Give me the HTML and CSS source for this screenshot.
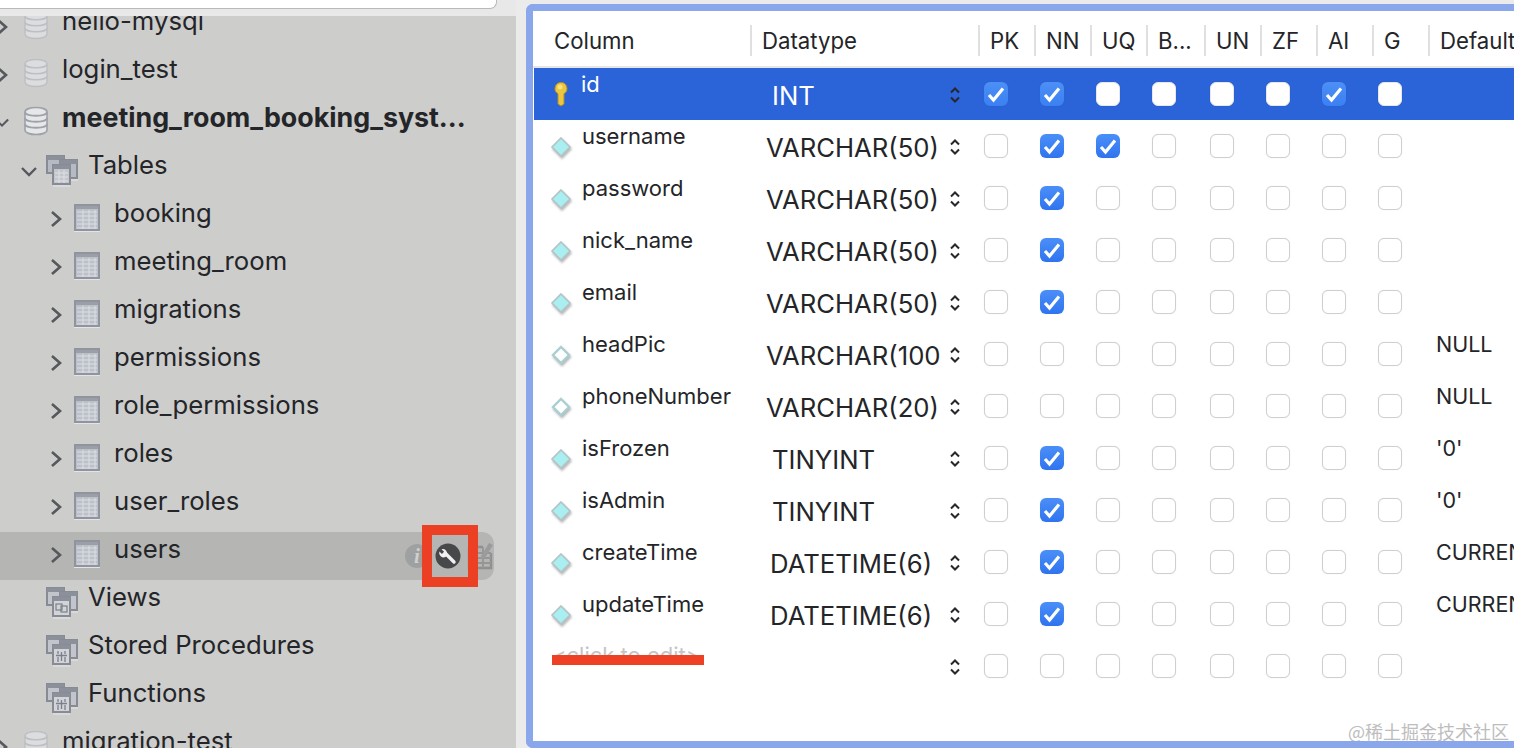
FILE: index.html
```html
<!DOCTYPE html>
<html lang="en">
<head>
<meta charset="utf-8">
<title>MySQL Workbench</title>
<link rel="stylesheet" href="styles.css">
</head>
<body>
<svg class="defs" width="0" height="0" aria-hidden="true">
  <defs>
    <symbol id="right" viewBox="0 0 14 20"><path d="M3 3l8 7-8 7" fill="none" stroke="#55585c" stroke-width="2.6"/></symbol>
    <symbol id="down" viewBox="0 0 16 20"><path d="M1 6l7 7 7-7" fill="none" stroke="#55585c" stroke-width="2.4"/></symbol>
    <symbol id="db" viewBox="0 0 24 30">
      <path d="M1 6c0-6 22-6 22 0v18c0 6-22 6-22 0z" fill="#dcddde" stroke="#bdbfc3" stroke-width="1.4"/>
      <path d="M1 6c0 5 22 5 22 0M1 12c0 5 22 5 22 0M1 18c0 5 22 5 22 0" fill="none" stroke="#bdbfc3" stroke-width="1.6"/>
    </symbol>
    <symbol id="db-open" viewBox="0 0 24 30">
      <path d="M1 6c0-6 22-6 22 0v18c0 6-22 6-22 0z" fill="#e6e7e8" stroke="#9da1a8" stroke-width="1.6"/>
      <path d="M1 6c0 5 22 5 22 0M1 12c0 5 22 5 22 0M1 18c0 5 22 5 22 0" fill="none" stroke="#9da1a8" stroke-width="1.800"/>
    </symbol>
    <symbol id="table" viewBox="0 0 26 28">
      <rect x="1" y="1" width="24" height="25" fill="#bcc0c8" stroke="#8f949e" stroke-width="2"/>
      <rect x="2" y="2" width="22" height="3" fill="#9a9fa8"/>
      <path d="M3 8h20M3 12h20M3 16h20M3 20h20M3 24h20M9 6v19M15 6v19M21 6v19" stroke="#dcdee2" stroke-width="1"/>
      <path d="M0 27.500h26" stroke="#e4e4e4" stroke-width="1"/>
    </symbol>
    <symbol id="group" viewBox="0 0 32 32">
      <rect x="1" y="1" width="17" height="17" fill="#b6bac2" stroke="#868b95" stroke-width="2"/>
      <rect x="1" y="1" width="17" height="4" fill="#8b909a"/>
      <rect x="14" y="5" width="17" height="18" fill="#b6bac2" stroke="#868b95" stroke-width="2"/>
      <rect x="14" y="5" width="17" height="4" fill="#8b909a"/>
      <rect x="7" y="10" width="17" height="19" fill="#c3c6cc" stroke="#868b95" stroke-width="2"/>
      <rect x="7" y="10" width="17" height="4" fill="#8b909a"/>
      <path d="M9 18h13M9 22h13M9 26h13M13 15v13M18 15v13" stroke="#dee0e4" stroke-width="1"/>
      <path d="M7 31h17M25 25h7" stroke="#e6e6e6" stroke-width="1"/>
    </symbol>
    <symbol id="group-view" viewBox="0 0 32 32">
      <rect x="1" y="1" width="17" height="17" fill="#c2c5cb" stroke="#868b95" stroke-width="2"/>
      <rect x="1" y="1" width="17" height="4" fill="#8b909a"/>
      <rect x="14" y="5" width="17" height="18" fill="#c2c5cb" stroke="#868b95" stroke-width="2"/>
      <rect x="14" y="5" width="17" height="4" fill="#8b909a"/>
      <rect x="7" y="10" width="17" height="19" fill="#d2d4d8" stroke="#868b95" stroke-width="2"/>
      <rect x="7" y="10" width="17" height="4" fill="#8b909a"/>
      <rect x="10" y="17" width="6" height="6" fill="none" stroke="#7b808a" stroke-width="1.200"/>
      <rect x="15" y="19" width="6" height="6" fill="none" stroke="#7b808a" stroke-width="1.200"/>
      <path d="M7 31h17M25 25h7" stroke="#e6e6e6" stroke-width="1"/>
    </symbol>
    <symbol id="group-proc" viewBox="0 0 32 32">
      <rect x="1" y="1" width="17" height="17" fill="#c2c5cb" stroke="#868b95" stroke-width="2"/>
      <rect x="1" y="1" width="17" height="4" fill="#8b909a"/>
      <rect x="14" y="5" width="17" height="18" fill="#c2c5cb" stroke="#868b95" stroke-width="2"/>
      <rect x="14" y="5" width="17" height="4" fill="#8b909a"/>
      <rect x="7" y="10" width="17" height="19" fill="#d2d4d8" stroke="#868b95" stroke-width="2"/>
      <rect x="7" y="10" width="17" height="4" fill="#8b909a"/>
      <path d="M12 16v3M12 22v5M15.500 17v9M19 16v3M19 22v5M10 20.500h5M16 20.500h5" stroke="#7b808a" stroke-width="1.300"/>
      <path d="M7 31h17M25 25h7" stroke="#e6e6e6" stroke-width="1"/>
    </symbol>
    <symbol id="key" viewBox="0 0 18 26">
      <path d="M9 1.500a6 6 0 0 1 3 11.200V23l-3 2-3-2V12.700a6 6 0 0 1 3-11.200z" fill="#ecc63f" stroke="#a98e2c" stroke-width="1"/>
      <circle cx="8" cy="6" r="2.500" fill="#f8e27e"/>
    </symbol>
    <symbol id="dia" viewBox="0 0 22 22">
      <path d="M11 2l9 9-9 9-9-9z" fill="#a9eef0" stroke="#b4c4c5" stroke-width="1.600"/>
    </symbol>
    <symbol id="dia-null" viewBox="0 0 22 22">
      <path d="M11 3l8 8-8 8-8-8z" fill="#fff" stroke="#a9cfd2" stroke-width="2.400"/>
    </symbol>
    <symbol id="updown" viewBox="0 0 12 18">
      <path d="M2 6.500l4-4 4 4M2 11.500l4 4 4-4" fill="none" stroke="#26282c" stroke-width="2"/>
    </symbol>
    <symbol id="check" viewBox="0 0 24 24">
      <path d="M5 13l4.500 5L19 6.500" fill="none" stroke="#fff" stroke-width="3.200"/>
    </symbol>
    <symbol id="wrench" viewBox="0 0 26 26">
      <circle cx="13" cy="13" r="12.500" fill="#47484a"/>
      <path d="M19 19l-7.500-7.500" stroke="#f1f1f1" stroke-width="3.400" stroke-linecap="round"/>
      <path d="M12 12a4.500 4.500 0 0 0-5.500-5.700l2.600 2.500-2.200 2.200-2.500-2.500A4.500 4.500 0 0 0 10.500 14z" fill="#f1f1f1"/>
    </symbol>
    <symbol id="tbl-edit" viewBox="0 0 26 32">
      <path d="M2 8h14M2 8v21h22V14" fill="none" stroke="#8f9090" stroke-width="2.400"/>
      <path d="M2 14h22M2 19h22M2 24h22M9 8v21M16 8v21" stroke="#959696" stroke-width="1.800"/>
      <path d="M14 17l8-13 4 2-8 13-4 1z" fill="#9a9b9b"/>
    </symbol>
  </defs>
</svg>

<div class="app">
  <aside class="side">
    <div class="search-area"><div class="search"></div></div>
    <div class="tree-clip">
      <ul class="tree">
        <li class="node l0"><svg class="chev"><use href="#right"/></svg><svg class="ic-db"><use href="#db"/></svg><span class="label">hello-mysql</span></li>
        <li class="node l0"><svg class="chev"><use href="#right"/></svg><svg class="ic-db"><use href="#db"/></svg><span class="label">login_test</span></li>
        <li class="node l0"><svg class="chev"><use href="#down"/></svg><svg class="ic-db"><use href="#db-open"/></svg><span class="label strong">meeting_room_booking_syst...</span></li>
        <li class="node l1"><svg class="chev"><use href="#down"/></svg><svg class="ic-group"><use href="#group"/></svg><span class="label">Tables</span></li>
        <li class="node l2"><svg class="chev"><use href="#right"/></svg><svg class="ic-table"><use href="#table"/></svg><span class="label">booking</span></li>
        <li class="node l2"><svg class="chev"><use href="#right"/></svg><svg class="ic-table"><use href="#table"/></svg><span class="label">meeting_room</span></li>
        <li class="node l2"><svg class="chev"><use href="#right"/></svg><svg class="ic-table"><use href="#table"/></svg><span class="label">migrations</span></li>
        <li class="node l2"><svg class="chev"><use href="#right"/></svg><svg class="ic-table"><use href="#table"/></svg><span class="label">permissions</span></li>
        <li class="node l2"><svg class="chev"><use href="#right"/></svg><svg class="ic-table"><use href="#table"/></svg><span class="label">role_permissions</span></li>
        <li class="node l2"><svg class="chev"><use href="#right"/></svg><svg class="ic-table"><use href="#table"/></svg><span class="label">roles</span></li>
        <li class="node l2"><svg class="chev"><use href="#right"/></svg><svg class="ic-table"><use href="#table"/></svg><span class="label">user_roles</span></li>
        <li class="node l2 hover"><svg class="chev"><use href="#right"/></svg><svg class="ic-table"><use href="#table"/></svg><span class="label">users</span>
          <span class="tools">
            <span class="tool-info">i</span>
            <svg class="tool-wrench"><use href="#wrench"/></svg>
            <svg class="tool-edit"><use href="#tbl-edit"/></svg>
          </span>
          <span class="mark-box"></span>
        </li>
        <li class="node l1"><span class="chev"></span><svg class="ic-group"><use href="#group-view"/></svg><span class="label">Views</span></li>
        <li class="node l1"><span class="chev"></span><svg class="ic-group"><use href="#group-proc"/></svg><span class="label">Stored Procedures</span></li>
        <li class="node l1"><span class="chev"></span><svg class="ic-group"><use href="#group-proc"/></svg><span class="label">Functions</span></li>
        <li class="node l0"><svg class="chev"><use href="#right"/></svg><svg class="ic-db"><use href="#db"/></svg><span class="label">migration-test</span></li>
      </ul>
    </div>
  </aside>

  <main class="panel">
    <div class="grid">
      <div class="row head">
        <div class="hc first"><span>Column</span></div>
        <div class="hc"><span>Datatype</span></div>
        <div class="hc"><span>PK</span></div>
        <div class="hc"><span>NN</span></div>
        <div class="hc"><span>UQ</span></div>
        <div class="hc"><span>B...</span></div>
        <div class="hc"><span>UN</span></div>
        <div class="hc"><span>ZF</span></div>
        <div class="hc"><span>AI</span></div>
        <div class="hc"><span>G</span></div>
        <div class="hc"><span>Default</span></div>
      </div>

      <div class="row selected">
        <div class="name"><svg class="ic-key"><use href="#key"/></svg><span>id</span></div>
        <div class="type"><span class="tname t-int">INT</span><svg class="updown"><use href="#updown"/></svg></div>
        <div class="cb"><span class="box on"><svg><use href="#check"/></svg></span></div>
        <div class="cb"><span class="box on"><svg><use href="#check"/></svg></span></div>
        <div class="cb"><span class="box"></span></div>
        <div class="cb"><span class="box"></span></div>
        <div class="cb"><span class="box"></span></div>
        <div class="cb"><span class="box"></span></div>
        <div class="cb"><span class="box on"><svg><use href="#check"/></svg></span></div>
        <div class="cb"><span class="box"></span></div>
        <div class="def"></div>
      </div>

      <div class="row">
        <div class="name"><svg class="ic-dia"><use href="#dia"/></svg><span>username</span></div>
        <div class="type"><span class="tname t-var">VARCHAR(50)</span><svg class="updown"><use href="#updown"/></svg></div>
        <div class="cb"><span class="box"></span></div>
        <div class="cb"><span class="box on"><svg><use href="#check"/></svg></span></div>
        <div class="cb"><span class="box on"><svg><use href="#check"/></svg></span></div>
        <div class="cb"><span class="box"></span></div>
        <div class="cb"><span class="box"></span></div>
        <div class="cb"><span class="box"></span></div>
        <div class="cb"><span class="box"></span></div>
        <div class="cb"><span class="box"></span></div>
        <div class="def"></div>
      </div>

      <div class="row">
        <div class="name"><svg class="ic-dia"><use href="#dia"/></svg><span>password</span></div>
        <div class="type"><span class="tname t-var">VARCHAR(50)</span><svg class="updown"><use href="#updown"/></svg></div>
        <div class="cb"><span class="box"></span></div>
        <div class="cb"><span class="box on"><svg><use href="#check"/></svg></span></div>
        <div class="cb"><span class="box"></span></div>
        <div class="cb"><span class="box"></span></div>
        <div class="cb"><span class="box"></span></div>
        <div class="cb"><span class="box"></span></div>
        <div class="cb"><span class="box"></span></div>
        <div class="cb"><span class="box"></span></div>
        <div class="def"></div>
      </div>

      <div class="row">
        <div class="name"><svg class="ic-dia"><use href="#dia"/></svg><span>nick_name</span></div>
        <div class="type"><span class="tname t-var">VARCHAR(50)</span><svg class="updown"><use href="#updown"/></svg></div>
        <div class="cb"><span class="box"></span></div>
        <div class="cb"><span class="box on"><svg><use href="#check"/></svg></span></div>
        <div class="cb"><span class="box"></span></div>
        <div class="cb"><span class="box"></span></div>
        <div class="cb"><span class="box"></span></div>
        <div class="cb"><span class="box"></span></div>
        <div class="cb"><span class="box"></span></div>
        <div class="cb"><span class="box"></span></div>
        <div class="def"></div>
      </div>

      <div class="row">
        <div class="name"><svg class="ic-dia"><use href="#dia"/></svg><span>email</span></div>
        <div class="type"><span class="tname t-var">VARCHAR(50)</span><svg class="updown"><use href="#updown"/></svg></div>
        <div class="cb"><span class="box"></span></div>
        <div class="cb"><span class="box on"><svg><use href="#check"/></svg></span></div>
        <div class="cb"><span class="box"></span></div>
        <div class="cb"><span class="box"></span></div>
        <div class="cb"><span class="box"></span></div>
        <div class="cb"><span class="box"></span></div>
        <div class="cb"><span class="box"></span></div>
        <div class="cb"><span class="box"></span></div>
        <div class="def"></div>
      </div>

      <div class="row">
        <div class="name"><svg class="ic-dia"><use href="#dia-null"/></svg><span>headPic</span></div>
        <div class="type"><span class="tname t-var">VARCHAR(100)</span><svg class="updown"><use href="#updown"/></svg></div>
        <div class="cb"><span class="box"></span></div>
        <div class="cb"><span class="box"></span></div>
        <div class="cb"><span class="box"></span></div>
        <div class="cb"><span class="box"></span></div>
        <div class="cb"><span class="box"></span></div>
        <div class="cb"><span class="box"></span></div>
        <div class="cb"><span class="box"></span></div>
        <div class="cb"><span class="box"></span></div>
        <div class="def">NULL</div>
      </div>

      <div class="row">
        <div class="name"><svg class="ic-dia"><use href="#dia-null"/></svg><span>phoneNumber</span></div>
        <div class="type"><span class="tname t-var">VARCHAR(20)</span><svg class="updown"><use href="#updown"/></svg></div>
        <div class="cb"><span class="box"></span></div>
        <div class="cb"><span class="box"></span></div>
        <div class="cb"><span class="box"></span></div>
        <div class="cb"><span class="box"></span></div>
        <div class="cb"><span class="box"></span></div>
        <div class="cb"><span class="box"></span></div>
        <div class="cb"><span class="box"></span></div>
        <div class="cb"><span class="box"></span></div>
        <div class="def">NULL</div>
      </div>

      <div class="row">
        <div class="name"><svg class="ic-dia"><use href="#dia"/></svg><span>isFrozen</span></div>
        <div class="type"><span class="tname t-tiny">TINYINT</span><svg class="updown"><use href="#updown"/></svg></div>
        <div class="cb"><span class="box"></span></div>
        <div class="cb"><span class="box on"><svg><use href="#check"/></svg></span></div>
        <div class="cb"><span class="box"></span></div>
        <div class="cb"><span class="box"></span></div>
        <div class="cb"><span class="box"></span></div>
        <div class="cb"><span class="box"></span></div>
        <div class="cb"><span class="box"></span></div>
        <div class="cb"><span class="box"></span></div>
        <div class="def">'0'</div>
      </div>

      <div class="row">
        <div class="name"><svg class="ic-dia"><use href="#dia"/></svg><span>isAdmin</span></div>
        <div class="type"><span class="tname t-tiny">TINYINT</span><svg class="updown"><use href="#updown"/></svg></div>
        <div class="cb"><span class="box"></span></div>
        <div class="cb"><span class="box on"><svg><use href="#check"/></svg></span></div>
        <div class="cb"><span class="box"></span></div>
        <div class="cb"><span class="box"></span></div>
        <div class="cb"><span class="box"></span></div>
        <div class="cb"><span class="box"></span></div>
        <div class="cb"><span class="box"></span></div>
        <div class="cb"><span class="box"></span></div>
        <div class="def">'0'</div>
      </div>

      <div class="row">
        <div class="name"><svg class="ic-dia"><use href="#dia"/></svg><span>createTime</span></div>
        <div class="type"><span class="tname t-date">DATETIME(6)</span><svg class="updown"><use href="#updown"/></svg></div>
        <div class="cb"><span class="box"></span></div>
        <div class="cb"><span class="box on"><svg><use href="#check"/></svg></span></div>
        <div class="cb"><span class="box"></span></div>
        <div class="cb"><span class="box"></span></div>
        <div class="cb"><span class="box"></span></div>
        <div class="cb"><span class="box"></span></div>
        <div class="cb"><span class="box"></span></div>
        <div class="cb"><span class="box"></span></div>
        <div class="def">CURRENT_TIMESTAMP(6)</div>
      </div>

      <div class="row">
        <div class="name"><svg class="ic-dia"><use href="#dia"/></svg><span>updateTime</span></div>
        <div class="type"><span class="tname t-date">DATETIME(6)</span><svg class="updown"><use href="#updown"/></svg></div>
        <div class="cb"><span class="box"></span></div>
        <div class="cb"><span class="box on"><svg><use href="#check"/></svg></span></div>
        <div class="cb"><span class="box"></span></div>
        <div class="cb"><span class="box"></span></div>
        <div class="cb"><span class="box"></span></div>
        <div class="cb"><span class="box"></span></div>
        <div class="cb"><span class="box"></span></div>
        <div class="cb"><span class="box"></span></div>
        <div class="def">CURRENT_TIMESTAMP(6)</div>
      </div>

      <div class="row">
        <div class="name new"><span class="hint">&lt;click to edit&gt;</span><span class="mark-line"></span></div>
        <div class="type"><span class="tname"></span><svg class="updown"><use href="#updown"/></svg></div>
        <div class="cb"><span class="box"></span></div>
        <div class="cb"><span class="box"></span></div>
        <div class="cb"><span class="box"></span></div>
        <div class="cb"><span class="box"></span></div>
        <div class="cb"><span class="box"></span></div>
        <div class="cb"><span class="box"></span></div>
        <div class="cb"><span class="box"></span></div>
        <div class="cb"><span class="box"></span></div>
        <div class="def"></div>
      </div>
    </div>
    <div class="watermark">@稀土掘金技术社区</div>
  </main>
</div>
</body>
</html>
```
FILE: styles.css
```css
* { box-sizing: border-box; }
html, body { margin: 0; height: 100%; overflow: hidden; }
body { font-family: Inter, "Noto Sans", "Liberation Sans", sans-serif; color: #242528; background: #ebebeb; }
.defs { position: absolute; }
ul { list-style: none; margin: 0; padding: 0; }

.app { display: flex; height: 748px; width: 1514px; }

/* sidebar */
.side { width: 516px; flex: none; height: 100%; display: flex; flex-direction: column; background: #cdcdcc; }
.search-area { height: 16px; flex: none; background: #e8e8e8; }
.search { width: 497px; height: 9px; background: #fff; border-bottom: 1px solid #b9b9b9; border-right: 1px solid #b9b9b9; border-bottom-right-radius: 7px; }
.tree-clip { flex: 1; overflow: hidden; }
.tree { margin-top: -12px; }
.node { position: relative; display: flex; align-items: flex-start; height: 48px; font-size: 25.700px; line-height: 34px; white-space: nowrap; }
.chev { width: 14px; height: 20px; flex: none; margin-top: 13px; }
.l0 .chev { margin-left: -5px; margin-right: -2px; }
.l1 { padding-left: 21px; }
.l1 .chev { width: 16px; margin-right: -2px; margin-top: 14px; }
.l2 { padding-left: 49px; }
.ic-db { width: 24px; height: 30px; flex: none; margin: 6px 14px 0 17px; }
.ic-group { width: 32px; height: 32px; flex: none; margin: 7px 10px 0 11px; }
.ic-table { width: 26px; height: 28px; flex: none; margin: 8px 14px 0 11px; }
.strong { font-weight: 700; font-size: 26.800px; }
.hover { background: #b5b5b4; width: 494px; border-radius: 0 12px 12px 0; }
.tools { position: absolute; top: 0; right: 0; height: 48px; width: 92px; }
.tool-info { position: absolute; left: 3px; top: 12px; width: 24px; height: 24px; border-radius: 50%; background: #9fa0a0; color: #cfcfcf; font: italic 700 21px/24px "Liberation Serif", serif; text-align: center; }
.tool-wrench { position: absolute; left: 33px; top: 11px; width: 26px; height: 26px; }
.tool-edit { position: absolute; left: 65px; top: 7px; width: 26px; height: 32px; }
.mark-box { position: absolute; left: 422px; top: -7px; width: 56px; height: 62px; border: 10px solid #ec4024; }

/* table panel */
.panel { position: relative; width: 988px; margin: 4px 0 0 10px; height: 744px; flex: none; border: 7px solid #8aa7ec; border-right: 0; border-radius: 7px 0 0 7px; background: #fff; overflow: hidden; }
.row { display: grid; grid-template-columns: 217px 228px 56px 56px 56px 58px 56px 56px 56px 56px 1fr; height: 52px; white-space: nowrap; }
.head { height: 57px; padding-top: 14px; border-bottom: 2px solid #e6e6e6; font-size: 22.200px; }
.hc { height: 31px; line-height: 31px; border-left: 2px solid #e0e0e0; padding-left: 10px; }
.hc.first { border-left: 0; padding-left: 21px; }
.grid .row:not(.head) { margin-left: 1px; margin-right: -1px; }
.selected { background: #2b63d8; color: #fff; }
.name { display: flex; align-items: flex-start; padding-left: 18px; font-size: 22px; line-height: 32px; position: relative; }
.ic-key { width: 18px; height: 26px; flex: none; margin: 13px 11px 0 0; }
.ic-dia { width: 22px; height: 22px; flex: none; margin: 16px 10px 0 -2px; filter: drop-shadow(1px 2px 1px rgba(0,0,0,.28)); }
.type { display: flex; justify-content: space-between; align-items: flex-start; padding-right: 18px; font-size: 25.700px; line-height: 56px; }
.tname { display: block; overflow: hidden; }
.t-int { padding-left: 21px; }
.t-var { padding-left: 15px; max-width: 189px; }
.t-tiny { padding-left: 21px; }
.t-date { padding-left: 19px; }
.updown { width: 12px; height: 18px; flex: none; margin-top: 18px; }
.cb { padding: 14px 0 0 5px; }
.box { display: block; width: 24px; height: 24px; border-radius: 6px; background: #fff; border: 1px solid #cfcfcf; box-shadow: 0 0 1px rgba(0,0,0,.12); }
.selected .box { border-color: #e8e8e8; }
.box.on, .selected .box.on { background: linear-gradient(#4a8ff8, #2f74ee); border: 0; }
.selected .box.on { background: linear-gradient(#4c8ff6, #3b80f2); }
.box svg { display: block; width: 24px; height: 24px; }
.def { font-size: 21.500px; line-height: 32px; padding-left: 7px; overflow: hidden; }
.hint { color: #c4c4c4; line-height: 30px; }
.mark-line { position: absolute; left: 18px; top: 15px; width: 152px; height: 10px; background: #ee4024; }
.watermark { position: absolute; right: 5px; bottom: -2px; font: 18px/24px "Noto Sans CJK SC", sans-serif; color: #bdbdbd; white-space: nowrap; }
```
